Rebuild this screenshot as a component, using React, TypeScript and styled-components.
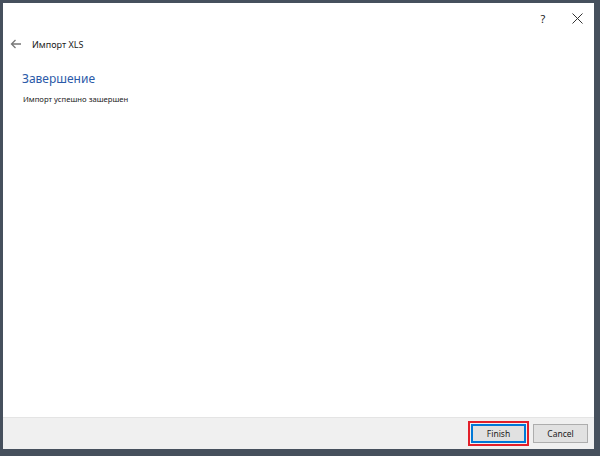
import React from "react";
import styled, { createGlobalStyle } from "styled-components";

const Global = createGlobalStyle`
  html, body { margin: 0; padding: 0; }
  body { background: #46505d; font-family: "Noto Sans", "Open Sans", sans-serif; }
`;

const Frame = styled.div`
  width: 600px;
  height: 456px;
  box-sizing: border-box;
  padding: 3px 6px 7px 3px;
  display: flex;
`;

const Window = styled.div`
  flex: 1;
  display: flex;
  flex-direction: column;
  background: #ffffff;
`;

const TitleBar = styled.div`
  height: 30px;
  display: flex;
  justify-content: flex-end;
  align-items: center;
  padding-right: 0;
`;

const TitleButton = styled.div`
  width: 34px;
  height: 24px;
  display: flex;
  align-items: center;
  justify-content: center;
  color: #222;
  font-size: 11px;
`;

const Header = styled.div`
  display: flex;
  align-items: center;
  height: 22px;
  padding-left: 7px;
  gap: 10px;
`;

const HeaderTitle = styled.span`
  font-size: 9px;
  color: #1a1a1a;
`;

const Content = styled.div`
  flex: 1;
  padding: 14px 0 0 19px;
`;

const Heading = styled.div`
  font-size: 12px;
  color: #2b5aa8;
  line-height: 20px;
`;

const Message = styled.div`
  margin-top: 5px;
  margin-left: 1px;
  font-size: 7.7px;
  color: #1a1a1a;
`;

const Footer = styled.div`
  height: 31px;
  background: #f0f0f0;
  border-top: 1px solid #e4e4e4;
  display: flex;
  align-items: center;
  justify-content: flex-end;
  padding-right: 6px;
  gap: 4px;
`;

const Highlight = styled.div`
  border: 2px solid #e2202a;
  padding: 1px;
  display: flex;
`;

const Button = styled.button<{ $primary?: boolean }>`
  width: 55px;
  height: 19px;
  box-sizing: border-box;
  background: #e1e1e1;
  border: 1px solid ${(p) => (p.$primary ? "#0078d7" : "#adadad")};
  box-shadow: ${(p) => (p.$primary ? "inset 0 0 0 1px #0078d7" : "none")};
  font-family: "Noto Sans", "Open Sans", sans-serif;
  font-size: 8.5px;
  color: #1a1a1a;
  padding: 0;
  display: flex;
  align-items: center;
  justify-content: center;
`;

export default function App() {
  return (
    <>
      <Global />
      <Frame>
        <Window>
          <TitleBar>
            <TitleButton>?</TitleButton>
            <TitleButton>
              <svg width="11" height="11" viewBox="0 0 11 11">
                <path d="M0.5 0.5 L10.5 10.5 M10.5 0.5 L0.5 10.5" stroke="#333" strokeWidth="1" />
              </svg>
            </TitleButton>
          </TitleBar>
          <Header>
            <svg width="12" height="10" viewBox="0 0 12 10">
              <path d="M11 5 H1.5 M5.5 1 L1.5 5 L5.5 9" stroke="#777" strokeWidth="1.3" fill="none" />
            </svg>
            <HeaderTitle>Импорт XLS</HeaderTitle>
          </Header>
          <Content>
            <Heading>Завершение</Heading>
            <Message>Импорт успешно зашершен</Message>
          </Content>
          <Footer>
            <Highlight>
              <Button $primary>Finish</Button>
            </Highlight>
            <Button>Cancel</Button>
          </Footer>
        </Window>
      </Frame>
    </>
  );
}
